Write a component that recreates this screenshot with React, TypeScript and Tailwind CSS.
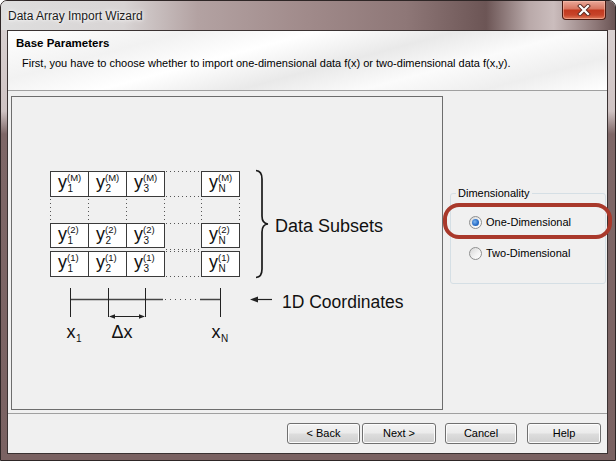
import React from "react";

const rows = [
  { y: 171, h: 25, s: "(M)" },
  { y: 223, h: 24, s: "(2)" },
  { y: 251, h: 25, s: "(1)" },
];
const cells = [
  { x: 50, sub: "1" },
  { x: 88, sub: "2" },
  { x: 126, sub: "3" },
  { x: 201, sub: "N" },
];
const vx = [50.5, 88.5, 126.5, 164.5, 201.5, 239.5];

function Diagram() {
  const stroke = "#3a3a3a";
  return (
    <svg width={430} height={312} viewBox="12 97 430 312" className="block" fontFamily="'Liberation Sans', Arial, sans-serif">
      {rows.map((r) => (
        <g key={r.s}>
          <rect x={50.5} y={r.y + 0.5} width={114} height={r.h} fill="#ffffff" stroke={stroke} />
          <line x1={88.5} y1={r.y} x2={88.5} y2={r.y + r.h + 1} stroke={stroke} />
          <line x1={126.5} y1={r.y} x2={126.5} y2={r.y + r.h + 1} stroke={stroke} />
          <rect x={201.5} y={r.y + 0.5} width={38} height={r.h} fill="#ffffff" stroke={stroke} />
          <line x1={166} y1={r.y + 0.5} x2={201} y2={r.y + 0.5} stroke="#555" strokeDasharray="1 3" />
          {r.s !== "(2)" && (
            <line x1={166} y1={r.y + r.h + 0.5} x2={201} y2={r.y + r.h + 0.5} stroke="#555" strokeDasharray="1 3" />
          )}
          {cells.map((c) => (
            <g key={c.x}>
              <text x={c.x + 8} y={r.y + 17} fontSize={18} fill="#111">y</text>
              <text x={c.x + 17} y={r.y + 9.5} fontSize={9.5} fill="#111">{r.s}</text>
              <text x={c.x + 17.5} y={r.y + 20.5} fontSize={10} fill="#111">{c.sub}</text>
            </g>
          ))}
        </g>
      ))}
      <line x1={166} y1={249.5} x2={201} y2={249.5} stroke="#555" strokeDasharray="1 3" />
      {vx.map((x) => (
        <line key={x} x1={x} y1={199} x2={x} y2={222} stroke="#555" strokeDasharray="1 3" />
      ))}
      {/* brace */}
      <path
        d="M256 170.5 Q262 171 262 179 L262 216 Q262 223.5 268 224 Q262 224.5 262 232 L262 269 Q262 277 256 277.5"
        fill="none"
        stroke="#1a1a1a"
        strokeWidth={1.7}
      />
      <text x={275} y={231.5} fontSize={18} fill="#111">Data Subsets</text>

      {/* axis */}
      <line x1={70} y1={299.5} x2={163} y2={299.5} stroke="#444" strokeWidth={1.5} />
      <line x1={165} y1={299.5} x2={200} y2={299.5} stroke="#555" strokeWidth={1.2} strokeDasharray="1 4" />
      <line x1={200} y1={299.5} x2={220} y2={299.5} stroke="#444" strokeWidth={1.5} />
      {[70.5, 108.5, 145.5, 220.5].map((x) => (
        <line key={x} x1={x} y1={288} x2={x} y2={317} stroke="#222" strokeWidth={1} />
      ))}
      <line x1={110} y1={316.5} x2={144} y2={316.5} stroke="#222" strokeWidth={1} />
      <polygon points="109,316.5 115,314.3 115,318.7" fill="#222" />
      <polygon points="145,316.5 139,314.3 139,318.7" fill="#222" />

      <text x={66.5} y={338} fontSize={18} fill="#111">x</text>
      <text x={76} y={342} fontSize={10} fill="#111">1</text>
      <text x={111.5} y={338} fontSize={18} fill="#111">Δx</text>
      <text x={211.5} y={338} fontSize={18} fill="#111">x</text>
      <text x={221} y={342} fontSize={10} fill="#111">N</text>

      {/* arrow */}
      <line x1={255} y1={299.5} x2={272} y2={299.5} stroke="#222" strokeWidth={1.2} />
      <polygon points="250,299.5 258,296.5 258,302.5" fill="#222" />
      <text x={282} y={308} fontSize={17.5} fill="#111">1D Coordinates</text>
    </svg>
  );
}

function Radio({ checked, label }: { checked?: boolean; label: string }) {
  return (
    <div className="flex items-center h-[16px]">
      <div className="w-[13px] h-[13px] rounded-full border border-[#8e8f8f] bg-[linear-gradient(135deg,#d6d6d6_0%,#f4f4f4_60%,#ffffff_100%)] flex items-center justify-center">
        {checked && (
          <div className="w-[7px] h-[7px] rounded-full bg-[radial-gradient(circle_at_40%_40%,#7fb6ee_0%,#2a6fc9_55%,#1b4f9a_100%)]" />
        )}
      </div>
      <span className="ml-[4px] text-[11px] leading-[13px] text-black">{label}</span>
    </div>
  );
}

function Btn({ label, w }: { label: string; w: string }) {
  return (
    <div
      className={`${w} h-[21px] rounded-[3px] border border-[#707070] bg-[linear-gradient(to_bottom,#f3f3f3_0%,#ebebeb_48%,#dddddd_52%,#cfcfcf_100%)] shadow-[inset_0_0_0_1px_#fcfcfc] flex items-center justify-center text-[11px] text-black`}
    >
      {label}
    </div>
  );
}

export default function App() {
  return (
    <div className="w-[616px] h-[461px] relative overflow-hidden bg-white font-['Liberation_Sans',Arial,sans-serif]">
      <div className="w-[616px] h-[461px] flex flex-col rounded-t-[7px] border border-[#2e2626] bg-[linear-gradient(to_bottom,#dcd5d5_0%,#cfc3c3_24%,#7e6767_29%,#7a6262_100%)] overflow-hidden">
        {/* title bar */}
        <div className="relative h-[29px] shrink-0 flex items-center pl-[7px] bg-[linear-gradient(to_right,#dedede_0%,#d8d4d4_20%,#b3a2a2_32%,#a08a8a_50%,#8e7777_66%,#6c5555_79%,#b9a9a9_86%,#cbbdbd_90%,#8c7676_97%,#6a5454_100%)]">
          <span className="text-[12px] leading-[15px] text-[#1a1a1a] mt-[1px] [text-shadow:0_0_6px_#ffffff,0_0_3px_#ffffff]">
            Data Array Import Wizard
          </span>
          <div className="absolute right-[9px] top-0 w-[44px] h-[19px] rounded-b-[4px] border border-t-0 border-[#4a1a12] bg-[linear-gradient(to_bottom,#eaa899_0%,#d87762_42%,#c2391f_52%,#c7442a_78%,#df7a5a_100%)] shadow-[inset_0_0_0_1px_rgba(255,200,180,0.5)] flex items-center justify-center">
            <svg width="14" height="12" viewBox="0 0 14 12">
              <path d="M3 2 L11 10 M11 2 L3 10" stroke="#5a2a22" strokeWidth="4" strokeLinecap="square" />
              <path d="M3 2 L11 10 M11 2 L3 10" stroke="#ffffff" strokeWidth="2.2" strokeLinecap="square" />
            </svg>
          </div>
        </div>

        {/* client */}
        <div className="ml-[6px] mr-[7px] h-[424px] shrink-0 border border-[#3a3232] bg-[#f0f0f0] flex flex-col">
          <div className="h-[60px] shrink-0 border-b border-[#a0a0a0] bg-[linear-gradient(165deg,#ffffff_0%,#f2f2f2_22%,#ffffff_38%,#e9e9e9_55%,#fbfbfb_70%,#eeeeee_85%,#ffffff_100%)] pt-[5px]">
            <div className="pl-[8px] text-[11.5px] leading-[14px] font-bold text-black">Base Parameters</div>
            <div className="pl-[14px] mt-[6px] text-[11px] leading-[14px] text-black">
              First, you have to choose whether to import one-dimensional data f(x) or two-dimensional data f(x,y).
            </div>
          </div>

          <div className="h-[322px] shrink-0 flex pl-[3px] pt-[5px]">
            <div className="w-[432px] h-[314px] border border-[#6d6d6d] bg-[#f0f0f0]">
              <Diagram />
            </div>
            <div className="ml-[7px] pt-[91px]">
              <fieldset className="w-[156px] h-[97px] border border-[#d5dfe5] rounded-[3px]">
                <legend className="ml-[5px] px-[2px] text-[11px] leading-[13px] text-black">Dimensionality</legend>
                <div className="mt-[14px] pl-[18px] flex flex-col gap-[15px]">
                  <Radio checked label="One-Dimensional" />
                  <Radio label="Two-Dimensional" />
                </div>
              </fieldset>
            </div>
          </div>

          <div className="flex-1 border-t border-[#a0a0a0] flex justify-end items-start pt-[9px] pr-[6px]">
            <Btn label="< Back" w="w-[73px]" />
            <div className="w-[2px]" />
            <Btn label="Next >" w="w-[74px]" />
            <div className="w-[9px]" />
            <Btn label="Cancel" w="w-[72px]" />
            <div className="w-[10px]" />
            <Btn label="Help" w="w-[74px]" />
          </div>
        </div>
      </div>

      {/* red highlight */}
      <div className="absolute left-[443px] top-[203px] w-[169px] h-[36px] rounded-[16px] border-[4px] border-[#a9392b]" />
    </div>
  );
}
